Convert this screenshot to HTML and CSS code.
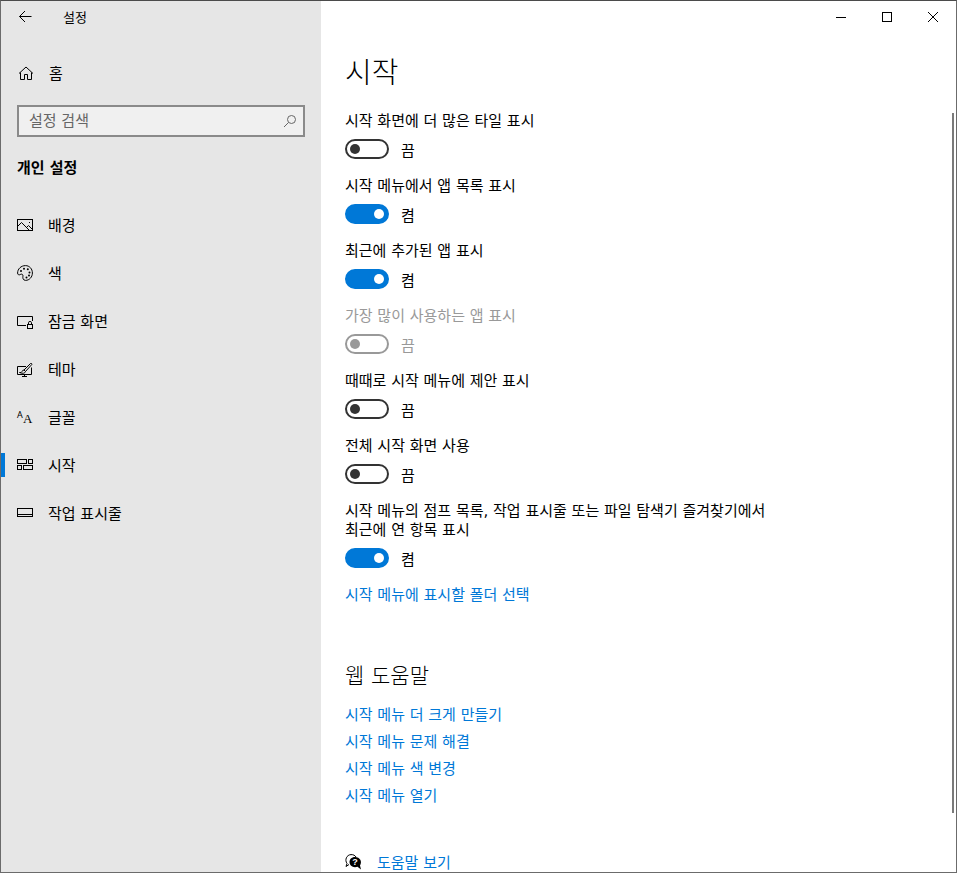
FILE: index.html
```html
<!DOCTYPE html>
<html lang="ko">
<head>
    <meta charset="UTF-8">
    <meta name="viewport" content="width=device-width, initial-scale=1.0">
    <title>설정</title>
    <link rel="stylesheet" href="styles.css">
</head>
<body>

    <div class="window">
        <aside class="sidebar">
            <div class="titlebar">
                <button class="back" aria-label="뒤로">
                    <svg width="16" height="16" viewBox="0 0 16 16"><path d="M14.500 7.500H2.500M8 2L2.500 7.500L8 13"/></svg>
                </button>
                <span>설정</span>
            </div>

            <a class="home" href="#">
                <svg width="16" height="16" viewBox="0 0 16 16"><path d="M1 8.500L8 2L15 8.500M2.500 7.500V14.500H6.500V9.500H9.500V14.500H13.500V7.500"/></svg>
                <span>홈</span>
            </a>

            <div class="search">
                <input type="text" placeholder="설정 검색" aria-label="설정 검색">
                <button aria-label="검색">
                    <svg width="14" height="14" viewBox="0 0 14 14"><circle cx="8.500" cy="5.500" r="4"/><path d="M5.500 8.500L1 13"/></svg>
                </button>
            </div>

            <h2>개인 설정</h2>

            <nav>
                <a href="#">
                    <svg width="16" height="16" viewBox="0 0 16 16"><rect x="0.500" y="2.500" width="15" height="11"/><path d="M1 9L4.500 5.500L12 13M9.500 10.500L11.500 8.500L15.500 12.500"/><path d="M12 5.500H13"/></svg>
                    <span>배경</span>
                </a>
                <a href="#">
                    <svg width="16" height="16" viewBox="0 0 16 16"><path d="M8.500 0.600C4 0.600 0.600 4 0.600 8C0.600 9.800 2 10.300 3.200 9.500C4.800 8.500 6.400 9.600 5.900 11.300C5.600 12.500 5.900 15.400 8.500 15.400C12.400 15.400 15.400 12 15.400 8C15.400 3.800 12.400 0.600 8.500 0.600Z"/><g class="solid"><circle cx="4" cy="6" r="1"/><circle cx="7" cy="3.700" r="1"/><circle cx="10.800" cy="4.300" r="1"/><circle cx="12.500" cy="7.500" r="1"/><circle cx="12" cy="10.500" r="1"/><circle cx="9.500" cy="12.500" r="1"/></g></svg>
                    <span>색</span>
                </a>
                <a href="#">
                    <svg width="16" height="16" viewBox="0 0 16 16"><path d="M9 12.500H0.500V3.500H15.500V8"/><rect x="10.500" y="11.500" width="5" height="4"/><path d="M11.500 11V9.500Q11.500 8.500 13 8.500Q14.500 8.500 14.500 9.500V11"/></svg>
                    <span>잠금 화면</span>
                </a>
                <a href="#">
                    <svg width="16" height="16" viewBox="0 0 16 16"><path d="M9 5.500H0.500V13.500H14.500V6.500M7.500 14V15.500M5 15.500H10"/><path d="M7 9L13.500 2.500Q15 2 14.800 3.500L8.500 10.500M7 9Q5.500 9 5 10.500Q4.500 12 2.500 11.500Q7.500 13.500 8.500 10.500Z"/></svg>
                    <span>테마</span>
                </a>
                <a href="#">
                    <svg width="16" height="16" viewBox="0 0 16 16"><text class="small-a" x="0" y="9">A</text><text class="large-a" x="6" y="14">A</text></svg>
                    <span>글꼴</span>
                </a>
                <a class="active" href="#">
                    <svg width="16" height="16" viewBox="0 0 16 16"><rect x="0.500" y="2.500" width="9" height="4"/><rect x="11.500" y="2.500" width="4" height="4"/><rect x="0.500" y="8.500" width="4" height="4"/><rect x="6.500" y="8.500" width="9" height="4"/></svg>
                    <span>시작</span>
                </a>
                <a href="#">
                    <svg width="16" height="16" viewBox="0 0 16 16"><rect x="0.500" y="3.500" width="15" height="8"/><path d="M1 9.500H15"/></svg>
                    <span>작업 표시줄</span>
                </a>
            </nav>
        </aside>

        <main>
            <div class="controls">
                <button aria-label="최소화"><svg width="10" height="10" viewBox="0 0 10 10"><path d="M0 5.500H10"/></svg></button>
                <button aria-label="최대화"><svg width="10" height="10" viewBox="0 0 10 10"><rect x="0.500" y="0.500" width="9" height="9"/></svg></button>
                <button aria-label="닫기"><svg width="10" height="10" viewBox="0 0 10 10"><path d="M0 0L10 10M10 0L0 10"/></svg></button>
            </div>

            <div class="content">
                <h1>시작</h1>

                <div class="setting">
                    <label for="moreTiles">시작 화면에 더 많은 타일 표시</label>
                    <div class="toggle"><input type="checkbox" role="switch" id="moreTiles"><span>끔</span></div>
                </div>
                <div class="setting">
                    <label for="appList">시작 메뉴에서 앱 목록 표시</label>
                    <div class="toggle"><input type="checkbox" role="switch" id="appList" checked><span>켬</span></div>
                </div>
                <div class="setting">
                    <label for="recentApps">최근에 추가된 앱 표시</label>
                    <div class="toggle"><input type="checkbox" role="switch" id="recentApps" checked><span>켬</span></div>
                </div>
                <div class="setting disabled">
                    <label for="mostUsed">가장 많이 사용하는 앱 표시</label>
                    <div class="toggle"><input type="checkbox" role="switch" id="mostUsed" disabled><span>끔</span></div>
                </div>
                <div class="setting">
                    <label for="suggestions">때때로 시작 메뉴에 제안 표시</label>
                    <div class="toggle"><input type="checkbox" role="switch" id="suggestions"><span>끔</span></div>
                </div>
                <div class="setting">
                    <label for="fullScreen">전체 시작 화면 사용</label>
                    <div class="toggle"><input type="checkbox" role="switch" id="fullScreen"><span>끔</span></div>
                </div>
                <div class="setting">
                    <label for="recentItems">시작 메뉴의 점프 목록, 작업 표시줄 또는 파일 탐색기 즐겨찾기에서 최근에 연 항목 표시</label>
                    <div class="toggle"><input type="checkbox" role="switch" id="recentItems" checked><span>켬</span></div>
                </div>
                <a href="#">시작 메뉴에 표시할 폴더 선택</a>

                <h3>웹 도움말</h3>
                <ul>
                    <li><a href="#">시작 메뉴 더 크게 만들기</a></li>
                    <li><a href="#">시작 메뉴 문제 해결</a></li>
                    <li><a href="#">시작 메뉴 색 변경</a></li>
                    <li><a href="#">시작 메뉴 열기</a></li>
                </ul>

                <div class="help">
                    <svg width="16" height="16" viewBox="0 0 16 16"><path d="M4 10.500L1 12.500L2 9.500C-0.500 6 1.500 0.800 6 0.600C8.500 0.500 10 1.500 11 3"/><path class="solid" d="M10 3C6.500 3 4.500 5.500 4.500 8.100C4.500 11.100 7 13.300 10 13.300C11 13.300 11.800 13.100 12.500 12.800L16 15.500L15 11.500C17.500 7.500 15 3 10 3Z"/><text class="mark" x="10" y="11">?</text></svg>
                    <a href="#">도움말 보기</a>
                </div>
            </div>

            <div class="scrollbar"></div>
        </main>
    </div>

    <script>
        // Keep the on/off text next to each switch in step
        document.querySelectorAll(".toggle input").forEach(function (input) {
            input.addEventListener("change", function () {
                input.nextElementSibling.textContent = input.checked ? "켬" : "끔";
            });
        });
    </script>

</body>
</html>
```

FILE: styles.css
```css
* {
    box-sizing: border-box;
    margin: 0;
    padding: 0;
}
body {
    font-family: "DejaVu Sans", "Noto Sans CJK KR", sans-serif;
    font-size: 15px;
    line-height: 19px;
    color: #000;
    word-break: keep-all;
}
a {
    color: #0078d7;
    text-decoration: none;
}
a:hover {
    color: #666;
}
button {
    background: none;
    border: none;
    display: flex;
    align-items: center;
    justify-content: center;
}
svg {
    flex: none;
    overflow: visible;
    fill: none;
    stroke: #000;
}
svg text, svg .solid {
    fill: #000;
    stroke: none;
}
.window {
    display: flex;
    height: 100vh;
    border: 1px solid #6b6b6b;
    border-top-color: #4b4b4b;
    overflow: hidden;
}

/* Left panel */
.sidebar {
    flex: 0 0 320px;
    background-color: #e6e6e6;
}
.titlebar {
    display: flex;
    align-items: center;
    gap: 14px;
    height: 32px;
    font-size: 13px;
}
.back {
    width: 48px;
    height: 32px;
}
.home, nav a {
    display: flex;
    align-items: center;
    gap: 15px;
    height: 48px;
    padding: 0 16px;
    color: #000;
}
.home span, nav span {
    padding-top: 2px;
}
.home {
    margin-top: 16px;
    padding: 0 17px;
}
.search {
    display: flex;
    height: 32px;
    margin: 8px 16px 22px;
    border: 2px solid #8a8a8a;
    background-color: #f0f0f0;
}
.search input {
    flex: 1;
    min-width: 0;
    padding: 0 10px;
    border: none;
    outline: none;
    background: none;
    font: inherit;
}
.search input::placeholder {
    color: #666;
}
.search button {
    width: 26px;
}
.search svg {
    stroke: #666;
}
h2 {
    padding: 0 16px;
    font-size: 15px;
    font-weight: bold;
}
nav {
    margin-top: 23px;
}
nav .active::before {
    content: "";
    width: 4px;
    height: 24px;
    margin-left: -16px;
    margin-right: -3px;
    background-color: #0078d7;
}
.small-a {
    font: 9px "Noto Sans", sans-serif;
}
.large-a {
    font: 13px "Liberation Serif", serif;
}

/* Right panel */
main {
    flex: 1;
    min-width: 0;
    position: relative;
    background-color: #fff;
}
.controls {
    display: flex;
    justify-content: flex-end;
}
.controls button {
    width: 46px;
    height: 32px;
}
.content {
    max-width: 480px;
    padding: 20px 24px 0;
}
h1 {
    margin-bottom: 19px;
    font-size: 29px;
    font-weight: 300;
    line-height: 40px;
}
.setting {
    margin-bottom: 18px;
}
.setting label {
    display: block;
    margin-bottom: 8px;
}
.toggle {
    display: flex;
    align-items: center;
    gap: 12px;
    height: 20px;
}
.toggle span {
    padding-top: 4px;
}
.toggle input {
    appearance: none;
    display: flex;
    align-items: center;
    width: 44px;
    height: 20px;
    padding: 0 3px;
    border: 2px solid #333;
    border-radius: 10px;
}
.toggle input::before {
    content: "";
    width: 10px;
    height: 10px;
    border-radius: 50%;
    background-color: #333;
}
.toggle input:checked {
    justify-content: flex-end;
    border-color: #0078d7;
    background-color: #0078d7;
}
.toggle input:checked::before {
    background-color: #fff;
}
.disabled {
    color: #999;
}
.disabled .toggle input {
    border-color: #999;
}
.disabled .toggle input::before {
    background-color: #999;
}
h3 {
    margin: 56px 0 15px;
    font-size: 21px;
    font-weight: 300;
    line-height: 30px;
}
ul {
    list-style: none;
}
li {
    margin-bottom: 8px;
}
.help {
    display: flex;
    align-items: flex-start;
    gap: 16px;
    margin-top: 48px;
}
.help .mark {
    fill: #fff;
    font: bold 9px "Liberation Sans", sans-serif;
    text-anchor: middle;
}
.scrollbar {
    position: absolute;
    top: 112px;
    right: 2px;
    width: 2px;
    height: 700px;
    background-color: #7a7a7a;
}
```
